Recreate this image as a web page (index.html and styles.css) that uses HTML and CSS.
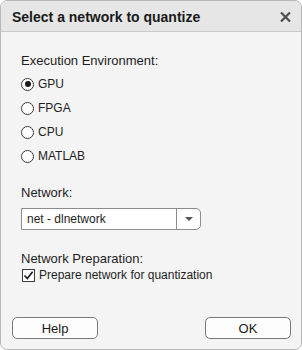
FILE: index.html
```html
<!DOCTYPE html>
<html>
<head>
<meta charset="utf-8">
<link rel="stylesheet" href="styles.css">
</head>
<body>
<div class="window">
  <div class="titlebar">
    <span class="title">Select a network to quantize</span>
    <svg class="close" width="11" height="10" viewBox="0 0 11 10"><path d="M1 0.5 L10 9.5 M10 0.5 L1 9.5" stroke="#505050" stroke-width="2.2" fill="none"/></svg>
  </div>
  <div class="content">
    <div class="label first">Execution Environment:</div>
    <div class="radios">
      <div class="row"><span class="radio checked"></span><span>GPU</span></div>
      <div class="row"><span class="radio"></span><span>FPGA</span></div>
      <div class="row"><span class="radio"></span><span>CPU</span></div>
      <div class="row"><span class="radio"></span><span>MATLAB</span></div>
    </div>
    <div class="label net">Network:</div>
    <div class="dropdown">
      <span class="value">net - dlnetwork</span>
      <span class="arrow"><svg width="8" height="4" viewBox="0 0 8 4"><path d="M0 0 H8 L4 4 Z" fill="#555"/></svg></span>
    </div>
    <div class="label prep">Network Preparation:</div>
    <div class="row check-row">
      <span class="checkbox"><svg width="11" height="11" viewBox="0 0 11 11"><path d="M1.5 5.5 L4.3 8.6 L9.6 1.8" stroke="#1a1a1a" stroke-width="1.6" fill="none"/></svg></span>
      <span>Prepare network for quantization</span>
    </div>
  </div>
  <div class="buttons">
    <button class="btn">Help</button>
    <button class="btn ok">OK</button>
  </div>
</div>
</body>
</html>
```
FILE: styles.css
```css
html, body {
  margin: 0;
  padding: 0;
  background: #ffffff;
}
.window {
  box-sizing: border-box;
  width: 302px;
  height: 350px;
  border: 1px solid #b8b8b8;
  border-radius: 7px;
  background: #f4f4f4;
  overflow: hidden;
  display: flex;
  flex-direction: column;
  font-family: "Liberation Sans", Arial, sans-serif;
  font-size: 13px;
  color: #1e1e1e;
}
.titlebar {
  height: 30px;
  flex: none;
  background: #e6e6e6;
  border-bottom: 1px solid #c9c9c9;
  display: flex;
  align-items: center;
  justify-content: space-between;
  padding: 0 10px 0 11px;
}
.title {
  font-weight: bold;
  font-size: 14px;
  color: #1a1a1a;
  margin-top: 1px;
}
.close {
  display: block;
  margin-top: 1px;
}
.content {
  flex: 1;
  padding-left: 20px;
  display: flex;
  flex-direction: column;
}
.label {
  line-height: 16px;
  height: 16px;
}
.label.first {
  margin-top: 21px;
}
.radios {
  margin-top: 7px;
  display: flex;
  flex-direction: column;
  gap: 8px;
}
.row {
  display: flex;
  align-items: center;
  height: 16px;
  line-height: 16px;
  font-size: 12px;
}
.radio {
  box-sizing: border-box;
  width: 13px;
  height: 13px;
  border: 1px solid #3a3a3a;
  border-radius: 50%;
  background: #ffffff;
  margin-right: 4px;
  display: flex;
  align-items: center;
  justify-content: center;
}
.radio.checked::after {
  content: "";
  width: 6px;
  height: 6px;
  border-radius: 50%;
  background: #1a1a1a;
}
.label.net {
  margin-top: 21px;
}
.dropdown {
  box-sizing: border-box;
  margin-top: 7px;
  width: 180px;
  height: 22px;
  border: 1px solid #8c8c8c;
  border-radius: 0 5px 5px 0;
  background: #ffffff;
  display: flex;
  align-items: center;
  font-size: 12px;
}
.value {
  flex: 1;
  padding-left: 5px;
}
.arrow {
  width: 23px;
  height: 100%;
  border-left: 1px solid #8c8c8c;
  display: flex;
  align-items: center;
  justify-content: center;
}
.arrow svg {
  display: block;
}
.label.prep {
  margin-top: 21px;
}
.check-row {
  margin-top: 0px;
}
.checkbox {
  box-sizing: border-box;
  width: 13px;
  height: 13px;
  border: 1px solid #3a3a3a;
  background: #ffffff;
  margin: 0 4px 0 1px;
  display: flex;
  align-items: center;
  justify-content: center;
}
.checkbox svg {
  display: block;
}
.buttons {
  flex: none;
  display: flex;
  justify-content: space-between;
  padding: 0 10px 10px 11px;
}
.btn {
  box-sizing: border-box;
  width: 86px;
  height: 22px;
  border: 1px solid #7a7a7a;
  border-radius: 5px;
  background: #fdfdfd;
  font-family: "Liberation Sans", Arial, sans-serif;
  font-size: 13px;
  color: #1a1a1a;
  padding: 0;
}
```
